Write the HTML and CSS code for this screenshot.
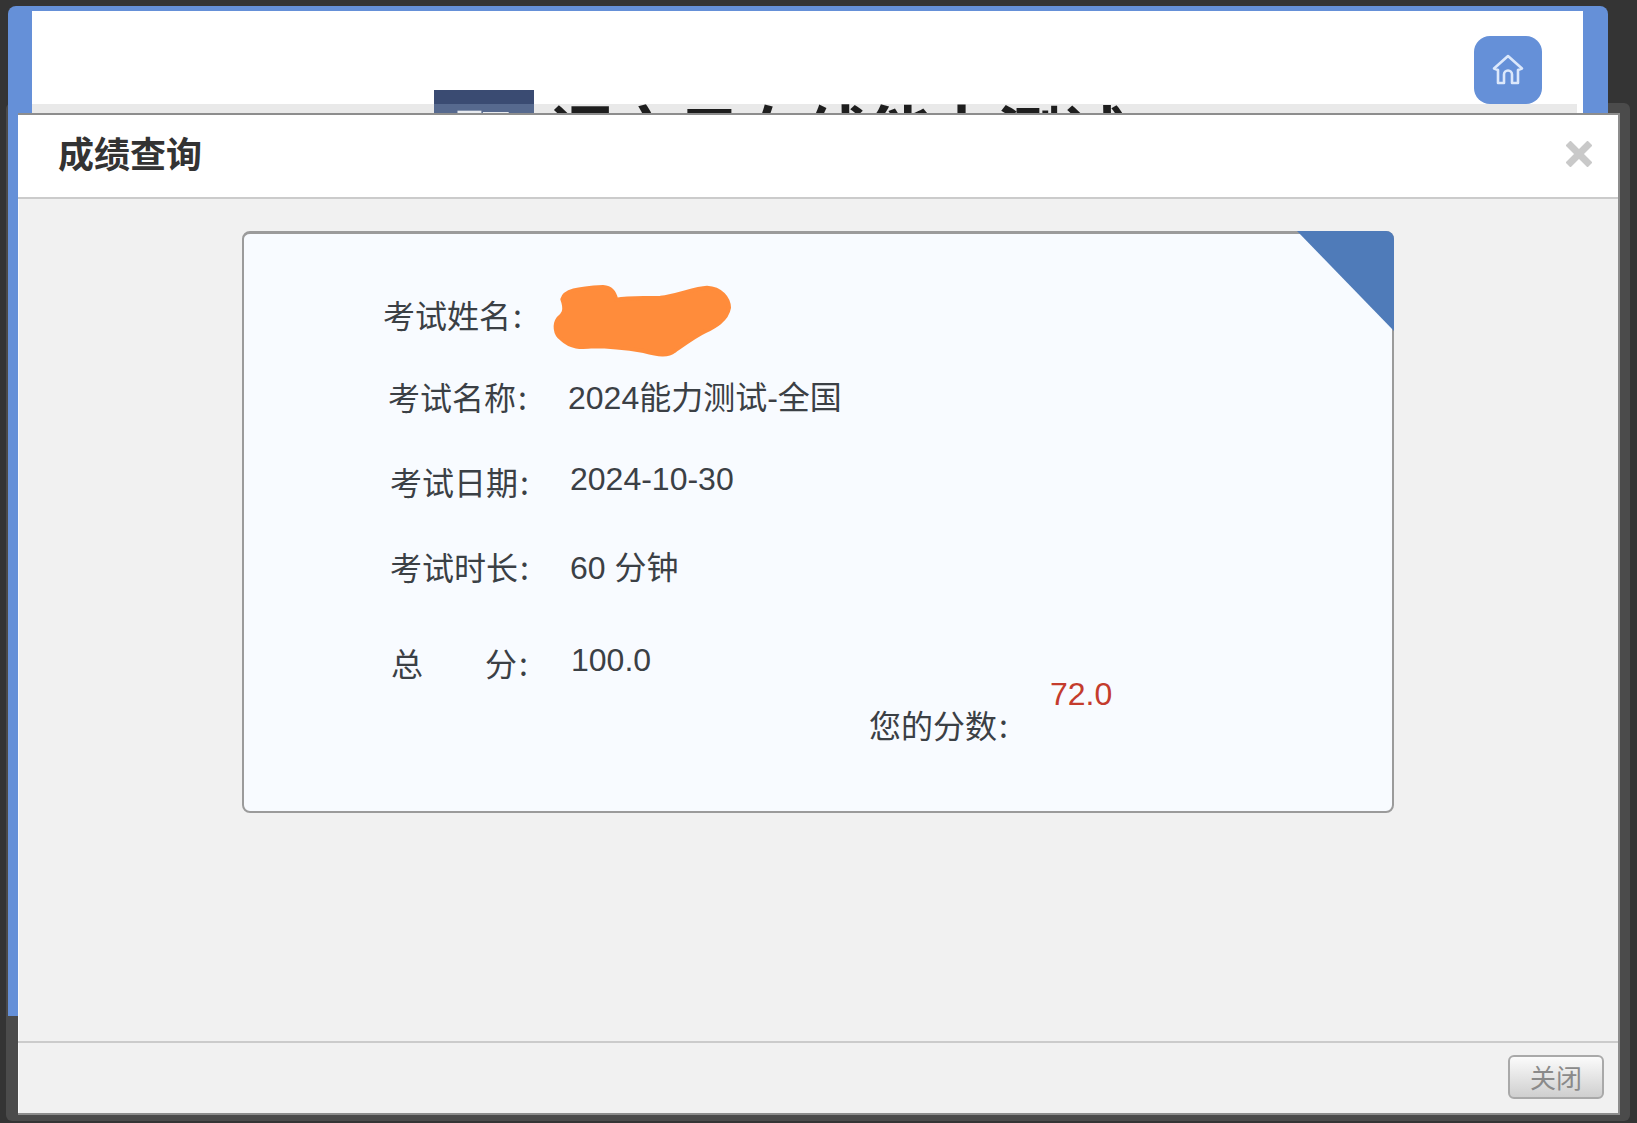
FILE: index.html
```html
<!DOCTYPE html>
<html lang="zh-CN">
<head>
<meta charset="utf-8">
<title>成绩查询</title>
<link rel="stylesheet" href="styles.css">
</head>
<body>
<div class="halo"></div>
<div class="window">
  <div class="page">
    <div class="page-top">
      <a class="home" href="#" aria-label="首页">
        <svg width="34" height="34" viewBox="0 0 34 34" fill="none" stroke="#dce8fb" stroke-width="2.6" stroke-linejoin="round" stroke-linecap="round">
          <path d="M17 3 31 15.5 27 17V30H21V21.5a4 4 0 0 0-8 0V30H7V17L3 15.5Z"/>
        </svg>
      </a>
    </div>
    <div class="page-band">
      <div class="logo"><span class="logo-mark">职</span></div>
      <div class="page-title">语言云在线能力测试</div>
    </div>
  </div>
</div>
<section class="modal">
  <header class="modal-head">
    <h1 class="modal-title">成绩查询</h1>
    <svg class="close" width="26" height="26" viewBox="0 0 26 26" stroke="#c9c9c9" stroke-width="7"><path d="M2 2 24 24M24 2 2 24"/></svg>
  </header>
  <div class="modal-body">
    <div class="card">
      <svg class="corner" width="97" height="100" viewBox="0 0 97 100"><path d="M0 0H89a8 8 0 0 1 8 8V100Z" fill="#4f7bb9"/></svg>
      <div class="row row-name">
        <span class="label">考试姓名<span class="colon">:</span></span>
        <svg class="blob" width="190" height="80" viewBox="560 40 570 240"><path d="M606 95C612 70 650 62 728 58 752 60 762 72 768 96 810 88 860 93 900 90 950 85 1000 62 1040 60 1082 62 1105 92 1106 120 1100 158 1060 178 1036 190 1006 204 968 232 942 250 922 266 895 262 850 250 800 242 750 236 700 236 660 240 632 240 604 214 582 198 582 168 594 152 606 142 620 132 606 95Z" fill="#ff8c3b" stroke="#ff8c3b" stroke-width="12" stroke-linejoin="round"/></svg>
      </div>
      <div class="row row-exam"><span class="label">考试名称<span class="colon">:</span></span><span class="value value-down">2024能力测试-全国</span></div>
      <div class="row row-date"><span class="label">考试日期<span class="colon">:</span></span><span class="value value-up">2024-10-30</span></div>
      <div class="row row-time"><span class="label">考试时长<span class="colon">:</span></span><span class="value value-down">60 分钟</span></div>
      <div class="row row-total"><span class="label label-split"><span>总</span><span>分<span class="colon">:</span></span></span><span class="value value-up">100.0</span></div>
      <div class="row row-score"><span class="label">您的分数<span class="colon">:</span></span><span class="value score">72.0</span></div>
    </div>
  </div>
  <footer class="modal-foot"><button class="btn" type="button">关闭</button></footer>
</section>
</body>
</html>
```

FILE: styles.css
```css
html, body { margin: 0; padding: 0; }
body {
  position: relative;
  width: 1637px;
  height: 1123px;
  overflow: hidden;
  background: #343434;
  font-family: "Liberation Sans", "Noto Sans CJK SC", sans-serif;
  color: #3b4045;
}
.halo {
  position: absolute;
  left: 6px;
  top: 103px;
  width: 1624px;
  height: 1018px;
  border-radius: 6px;
  background: #4b4b4b;
}
.window {
  position: relative;
  box-sizing: border-box;
  width: 1600px;
  height: 1010px;
  margin: 6px 0 0 8px;
  padding: 5px 25px 0 24px;
  border-radius: 8px 8px 0 0;
  background: #6590d8;
}
.page { background: #fff; height: 100%; }
.page-top {
  box-sizing: border-box;
  height: 93px;
  padding: 25px 0 0 1442px;
}
.home {
  display: flex;
  align-items: center;
  justify-content: center;
  width: 68px;
  height: 68px;
  border-radius: 16px;
  background: #6590d8;
  position: relative;
}
.page-band {
  display: flex;
  align-items: flex-start;
  height: 200px;
  margin-right: 6px;
  padding-left: 402px;
  background: #e9e9e9;
}
.logo {
  width: 100px;
  height: 60px;
  margin-top: -14px;
  background: linear-gradient(#3a4b72 0, #3a4b72 14px, #56698e 14px);
  text-align: center;
}
.logo-mark {
  display: block;
  color: #e8ebf0;
  font-size: 58px;
  line-height: 58px;
  margin-top: 14px;
  font-weight: 700;
  font-family: "Noto Sans CJK SC", sans-serif;
}
.page-title {
  margin: -13px 0 0 15px;
  color: #1e1e1e;
  font-size: 64px;
  line-height: 80px;
  font-weight: 700;
  white-space: nowrap;
  font-family: "Noto Sans CJK SC", sans-serif;
}
.modal {
  position: absolute;
  left: 18px;
  top: 113px;
  box-sizing: border-box;
  width: 1602px;
  height: 1002px;
  display: flex;
  flex-direction: column;
  background: #f1f1f1;
  border-top: 2px solid #8d8d8d;
  border-bottom: 2px solid #8d8d8d;
  border-right: 2px solid #8d8d8d;
  box-shadow: inset 1px 0 0 #fafafa;
}
.modal-head {
  box-sizing: border-box;
  flex: none;
  height: 84px;
  display: flex;
  align-items: center;
  justify-content: space-between;
  padding: 0 26px 8px 40px;
  background: #fff;
  border-bottom: 2px solid #cbcbcb;
}
.modal-title {
  margin: 0;
  font-size: 36px;
  font-weight: 700;
  color: #333;
  font-family: "Noto Sans CJK SC", sans-serif;
  line-height: 50px;
}
.close { flex: none; margin-top: 4px; }
.modal-body {
  flex: 1;
  padding: 32px 0 0 224px;
  border-bottom: 2px solid #cbcbcb;
}
.card {
  position: relative;
  box-sizing: border-box;
  width: 1152px;
  height: 582px;
  padding-top: 56px;
  background: #f8fbff;
  border: 2px solid #9b9b9b;
  border-top-width: 3px;
  border-radius: 8px;
  font-size: 32px;
}
.corner {
  position: absolute;
  right: -2px;
  top: -3px;
}
.row {
  display: flex;
  align-items: center;
  height: 50px;
  line-height: 50px;
  white-space: nowrap;
}
.label {
  font-family: "Noto Sans CJK SC", sans-serif;
  font-weight: 400;
  flex: none;
  width: 180px;
}
.colon { margin-left: 2px; }
.value { font-family: "Liberation Sans", "Noto Sans CJK SC", sans-serif; font-weight: 400; position: relative; }
.value-up { top: -2px; }
.value-down { top: 2px; }
.label-split { display: flex; justify-content: space-between; width: 137px; margin-right: 43px; }
.row-name { padding-left: 139px; height: 48px; }
.row-exam { padding-left: 144px; margin-top: 33px; }
.row-date { padding-left: 146px; margin-top: 35px; }
.row-time { padding-left: 146px; margin-top: 35px; }
.row-total { padding-left: 147px; margin-top: 46px; }
.row-score { padding-left: 625px; margin-top: 12px; }
.blob { margin-left: -16px; flex: none; position: relative; top: 7px; }
.row-score .label { width: 181px; }
.score { color: #c43c2d; top: -30px; }
.modal-foot {
  flex: none;
  box-sizing: border-box;
  height: 70px;
  padding: 12px 14px 0 0;
  display: flex;
  justify-content: flex-end;
  align-items: flex-start;
}
.btn {
  width: 96px;
  height: 44px;
  padding: 0;
  border: 2px solid #a9a9a9;
  border-radius: 6px;
  background: linear-gradient(#fbfbfb, #cfcfcf);
  color: #8a8a8a;
  font-size: 26px;
  line-height: 38px;
  font-family: "Noto Sans CJK SC", sans-serif;
  font-weight: 400;
}
```
